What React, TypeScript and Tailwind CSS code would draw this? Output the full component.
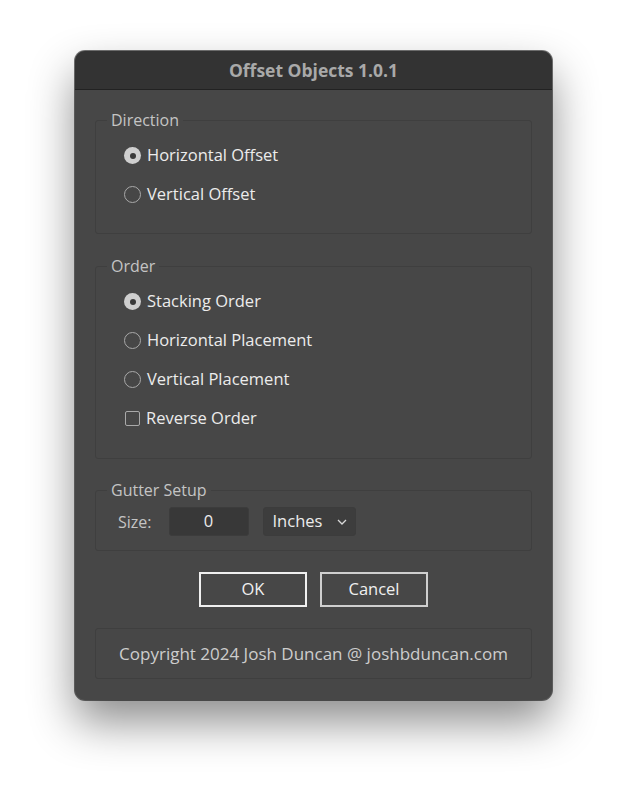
import { useState } from "react";

const font = { fontFamily: '"Open Sans", "Liberation Sans", sans-serif' };

function Radio({ checked, label, onSelect }: { checked: boolean; label: string; onSelect: () => void }) {
  return (
    <label className="flex h-[39px] items-center gap-[6px] cursor-default" onClick={onSelect}>
      {checked ? (
        <span className="flex h-[17px] w-[17px] items-center justify-center rounded-full bg-[#cfcfcf]">
          <span className="h-[6px] w-[6px] rounded-full bg-[#3a3a3a]" />
        </span>
      ) : (
        <span className="h-[17px] w-[17px] rounded-full border border-[#a9a9a9]" />
      )}
      <span className="text-[16.5px] font-medium text-[#ececec]">{label}</span>
    </label>
  );
}

function Group({ title, className, children }: { title: string; className?: string; children: React.ReactNode }) {
  return (
    <fieldset className="rounded-[3px] border border-[#3f3f3f]">
      <legend className="ml-[11px] px-[4px] text-[16px] font-medium leading-[20px] text-[#c4c4c4]">{title}</legend>
      <div className={className}>{children}</div>
    </fieldset>
  );
}

export default function App() {
  const [direction, setDirection] = useState("h");
  const [order, setOrder] = useState("stack");
  const [reverse, setReverse] = useState(false);

  return (
    <div className="min-h-[800px] w-[626px] bg-white pl-[75px] pt-[51px]" style={font}>
      <div className="flex h-[649px] w-[477px] flex-col overflow-hidden rounded-[10px] bg-[#474747] shadow-[0_0_0_1px_rgba(0,0,0,0.55),0_22px_45px_rgba(0,0,0,0.45)]">
        {/* Title bar */}
        <div className="flex h-[39px] items-center justify-center border-b border-[#222222] bg-[#333333]">
          <span className="text-[17.5px] font-bold text-[#a9a9a9]">Offset Objects 1.0.1</span>
        </div>

        <div className="flex flex-col px-[20px] pb-[21px]">
          <div className="mt-[20px]">
            <Group title="Direction" className="px-[28px] pt-[6px] pb-[19px]">
              <Radio checked={direction === "h"} label="Horizontal Offset" onSelect={() => setDirection("h")} />
              <Radio checked={direction === "v"} label="Vertical Offset" onSelect={() => setDirection("v")} />
            </Group>
          </div>

          <div className="mt-[22px]">
            <Group title="Order" className="px-[28px] pt-[6px] pb-[20px]">
              <Radio checked={order === "stack"} label="Stacking Order" onSelect={() => setOrder("stack")} />
              <Radio checked={order === "h"} label="Horizontal Placement" onSelect={() => setOrder("h")} />
              <Radio checked={order === "v"} label="Vertical Placement" onSelect={() => setOrder("v")} />
              <label className="flex h-[39px] items-center gap-[6px] pl-[1px]" onClick={() => setReverse(!reverse)}>
                <span className="flex h-[15px] w-[15px] items-center justify-center rounded-[2px] border border-[#a9a9a9] text-[11px] text-[#ececec]">
                  {reverse ? "✓" : ""}
                </span>
                <span className="text-[16.5px] font-medium text-[#ececec]">Reverse Order</span>
              </label>
            </Group>
          </div>

          <div className="mt-[21px]">
            <Group title="Gutter Setup" className="px-[22px] pt-[7px] pb-[14px]">
              <div className="flex items-center">
                <span className="text-[16px] font-medium text-[#c4c4c4]">Size:</span>
                <div className="ml-[17px] flex h-[29px] w-[80px] items-center justify-center rounded-[3px] border border-[#3c3c3c] bg-[#383838] text-[16.5px] font-medium text-[#ececec]">
                  0
                </div>
                <div className="ml-[14px] flex h-[29px] w-[93px] items-center justify-between rounded-[3px] border border-[#3c3c3c] bg-[#3d3d3d] pl-[9px] pr-[8px] text-[16.5px] font-medium text-[#ececec]">
                  <span>Inches</span>
                  <svg width="10" height="6" viewBox="0 0 10 6" fill="none" stroke="#d8d8d8" strokeWidth="1.3">
                    <path d="M1 1l4 4 4-4" />
                  </svg>
                </div>
              </div>
            </Group>
          </div>

          <div className="mt-[21px] flex justify-center gap-[13px]">
            <button className="flex h-[35px] w-[108px] items-center justify-center border-2 border-[#f0f0f0] text-[16.5px] font-medium text-[#f0f0f0]">
              OK
            </button>
            <button className="flex h-[35px] w-[108px] items-center justify-center border-2 border-[#cfcfcf] text-[16.5px] font-medium text-[#f0f0f0]">
              Cancel
            </button>
          </div>

          <div className="mt-[21px] flex h-[51px] items-center justify-center rounded-[3px] border border-[#3f3f3f] text-[17px] font-medium text-[#cdcdcd]">
            Copyright 2024 Josh Duncan @ joshbduncan.com
          </div>
        </div>
      </div>
    </div>
  );
}
